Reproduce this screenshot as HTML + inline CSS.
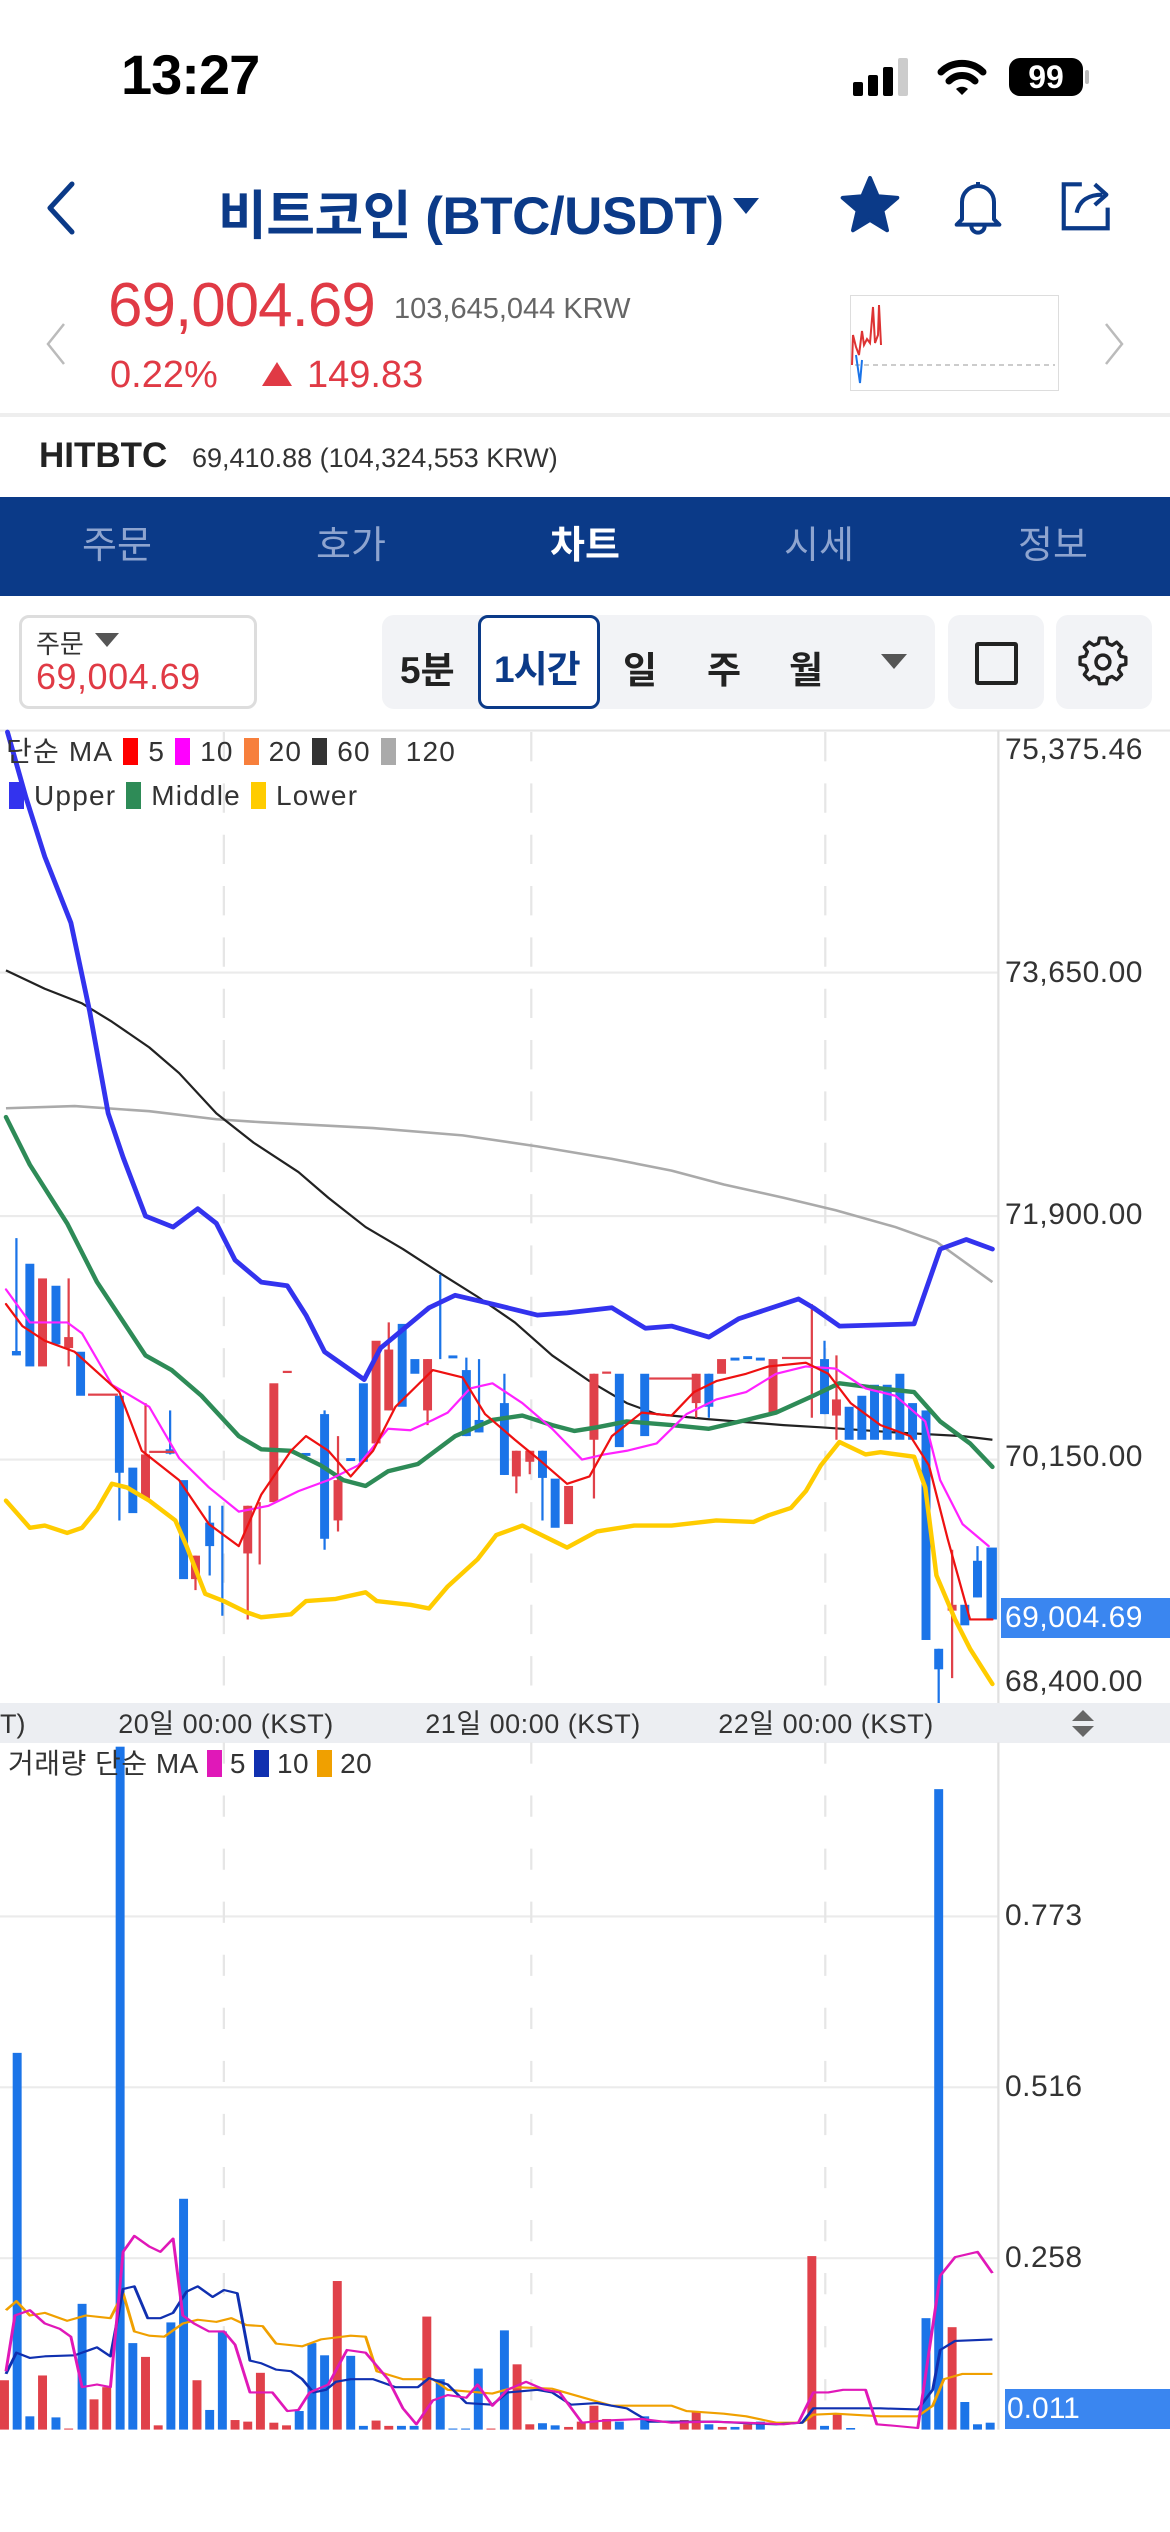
<!DOCTYPE html>
<html><head><meta charset="utf-8">
<style>
*{margin:0;padding:0;box-sizing:border-box}
body{width:1170px;height:2532px;background:#fff;position:relative;overflow:hidden;font-family:"Liberation Sans","Noto Sans CJK KR",sans-serif}
.a{position:absolute;white-space:nowrap}
.tab{position:absolute;top:497px;height:99px;width:234px;line-height:99px;text-align:center;font-size:38px;color:#8ea4cf}
.yl{position:absolute;left:1005px;font-size:30px;color:#333;line-height:34px;letter-spacing:0.5px}
.xl{position:absolute;top:1707px;font-size:27px;color:#333;line-height:34px;transform:translateX(-50%);letter-spacing:0.5px}
.sw{display:inline-block;width:15px;height:27px;vertical-align:-4px;margin:0 10px 0 10px}
.lg{font-size:28px;color:#333;line-height:34px;letter-spacing:1.2px}
</style></head><body>

<!-- status bar -->
<div class="a" style="left:121px;top:42px;font-size:56px;font-weight:bold;color:#000;letter-spacing:-1px">13:27</div>
<svg class="a" style="left:853px;top:58px" width="62" height="38"><rect x="0" y="24" width="10" height="14" rx="2" fill="#000"/><rect x="15" y="17" width="10" height="21" rx="2" fill="#000"/><rect x="30" y="9" width="10" height="29" rx="2" fill="#000"/><rect x="45" y="0" width="10" height="38" rx="2" fill="#ccc"/></svg>
<svg class="a" style="left:937px;top:58px" width="50" height="38"><path d="M4 14 A30 30 0 0 1 46 14" stroke="#000" stroke-width="7" fill="none" stroke-linecap="round"/><path d="M12 23 A18 18 0 0 1 38 23" stroke="#000" stroke-width="7" fill="none" stroke-linecap="round"/><path d="M19 31 L25 37 L31 31 A9 9 0 0 0 19 31Z" fill="#000"/></svg>
<div class="a" style="left:1009px;top:58px;width:74px;height:38px;background:#000;border-radius:11px;color:#fff;font-weight:bold;font-size:32px;text-align:center;line-height:38px">99</div>
<div class="a" style="left:1085px;top:70px;width:4px;height:14px;background:#bbb;border-radius:2px"></div>

<!-- nav -->
<svg class="a" style="left:40px;top:180px" width="40" height="56"><path d="M32 4 L10 28 L32 52" stroke="#0b3a88" stroke-width="5" fill="none" stroke-linecap="round" stroke-linejoin="round"/></svg>
<div class="a" style="left:218px;top:174px;font-size:53px;font-weight:bold;color:#0b3a88;letter-spacing:-0.5px">비트코인 (BTC/USDT)</div>
<svg class="a" style="left:733px;top:198px" width="26" height="18"><path d="M0 0 H26 L13 16Z" fill="#0b3a88"/></svg>
<svg class="a" style="left:838px;top:174px" width="64" height="62" viewBox="0 0 24 24"><path d="M12 1.5 L15 8.6 L22.6 9.2 L16.8 14.2 L18.6 21.8 L12 17.8 L5.4 21.8 L7.2 14.2 L1.4 9.2 L9 8.6Z" fill="#0b3a88" stroke="#0b3a88" stroke-width="1.5" stroke-linejoin="round"/></svg>
<svg class="a" style="left:946px;top:174px" width="64" height="64" viewBox="0 0 24 24"><path d="M6 17 V10.5 A6 6 0 0 1 18 10.5 V17 L20 19 H4 Z M9.5 19.5 A2.5 2.5 0 0 0 14.5 19.5 M12 3 V4.5" stroke="#0b3a88" stroke-width="1.5" fill="none" stroke-linejoin="round"/></svg>
<svg class="a" style="left:1055px;top:174px" width="64" height="62" viewBox="0 0 24 24"><path d="M10 4 H3 V21 H20 V13" stroke="#0b3a88" stroke-width="1.6" fill="none"/><path d="M8 15 C9 10 13 8 18 8 M15 4 L19.5 8 L15 12" stroke="#0b3a88" stroke-width="1.6" fill="none" stroke-linejoin="round"/></svg>

<!-- price -->
<svg class="a" style="left:42px;top:322px" width="28" height="44"><path d="M22 2 L6 22 L22 42" stroke="#bbb" stroke-width="2.5" fill="none"/></svg>
<div class="a" style="left:108px;top:270px;font-size:62px;color:#e03a45;letter-spacing:-1px">69,004.69</div>
<div class="a" style="left:394px;top:293px;font-size:29px;color:#666">103,645,044 KRW</div>
<div class="a" style="left:110px;top:354px;font-size:38px;color:#e03a45">0.22%</div>
<svg class="a" style="left:262px;top:362px" width="30" height="24"><path d="M15 0 L30 24 H0Z" fill="#e03a45"/></svg>
<div class="a" style="left:307px;top:354px;font-size:38px;color:#e03a45">149.83</div>
<div class="a" style="left:850px;top:295px;width:209px;height:96px;border:1px solid #ddd"></div>
<svg class="a" style="left:850px;top:295px" width="209" height="96"><line x1="5" y1="70" x2="205" y2="70" stroke="#ccc" stroke-dasharray="5 4" stroke-width="2"/><path d="M2 70 L3 40 L6 52 L9 60 L12 36 L14 50 L17 44 L20 48 L23 12 L25 48 L28 40 L29 10 L31 50" stroke="#d33" stroke-width="2" fill="none"/><path d="M6 60 L10 88 L12 65" stroke="#1b74e8" stroke-width="2" fill="none"/></svg>
<svg class="a" style="left:1100px;top:322px" width="28" height="44"><path d="M6 2 L22 22 L6 42" stroke="#bbb" stroke-width="2.5" fill="none"/></svg>

<div class="a" style="left:0;top:413px;width:1170px;height:4px;background:#eee"></div>
<div class="a" style="left:39px;top:436px;font-size:35px;font-weight:bold;color:#222">HITBTC</div>
<div class="a" style="left:192px;top:443px;font-size:27px;color:#333">69,410.88 (104,324,553 KRW)</div>

<!-- tabs -->
<div class="a" style="left:0;top:497px;width:1170px;height:99px;background:#0b3a88"></div>
<div class="tab" style="left:0">주문</div>
<div class="tab" style="left:234px">호가</div>
<div class="tab" style="left:468px;color:#fff;font-weight:bold">차트</div>
<div class="tab" style="left:702px">시세</div>
<div class="tab" style="left:936px">정보</div>

<!-- toolbar -->
<div class="a" style="left:19px;top:615px;width:238px;height:94px;border:3px solid #ddd;border-radius:10px"></div>
<div class="a" style="left:36px;top:624px;font-size:26px;color:#333">주문</div>
<svg class="a" style="left:95px;top:633px" width="24" height="16"><path d="M0 0 H24 L12 14Z" fill="#555"/></svg>
<div class="a" style="left:36px;top:656px;font-size:36px;color:#e03a45;letter-spacing:0.5px">69,004.69</div>
<div class="a" style="left:382px;top:615px;width:553px;height:94px;background:#f2f3f6;border-radius:12px"></div>
<div class="a" style="left:478px;top:615px;width:122px;height:94px;background:#fff;border:3px solid #0b3a88;border-radius:10px"></div>
<div class="a" style="left:400px;top:640px;font-size:37px;font-weight:bold;color:#222">5분</div>
<div class="a" style="left:494px;top:639px;font-size:37px;font-weight:bold;color:#0b3a88;letter-spacing:-1px">1시간</div>
<div class="a" style="left:623px;top:640px;font-size:37px;font-weight:bold;color:#222">일</div>
<div class="a" style="left:707px;top:640px;font-size:37px;font-weight:bold;color:#222">주</div>
<div class="a" style="left:789px;top:640px;font-size:37px;font-weight:bold;color:#222">월</div>
<svg class="a" style="left:881px;top:654px" width="26" height="16"><path d="M0 0 H26 L13 15Z" fill="#555"/></svg>
<div class="a" style="left:948px;top:615px;width:96px;height:94px;background:#f2f3f6;border-radius:12px"></div>
<div class="a" style="left:975px;top:642px;width:43px;height:43px;border:4px solid #222;border-radius:3px"></div>
<div class="a" style="left:1056px;top:615px;width:96px;height:94px;background:#f2f3f6;border-radius:12px"></div>
<svg class="a" style="left:1078px;top:636px" width="52" height="52" viewBox="0 0 24 24"><path d="M10.3 2 H13.7 L14.2 4.6 L16.4 5.5 L18.6 4 L21 6.4 L19.5 8.6 L20.4 10.8 L23 11.3 V14.7 L20.4 15.2 L19.5 17.4 L21 19.6 L18.6 22 L16.4 20.5 L14.2 21.4 L13.7 24 H10.3 L9.8 21.4 L7.6 20.5 L5.4 22 L3 19.6 L4.5 17.4 L3.6 15.2 L1 14.7 V11.3 L3.6 10.8 L4.5 8.6 L3 6.4 L5.4 4 L7.6 5.5 L9.8 4.6Z" transform="translate(0,-1) scale(0.96)" stroke="#222" stroke-width="1.6" fill="none" stroke-linejoin="round"/><circle cx="11.5" cy="12" r="3.2" stroke="#222" stroke-width="1.6" fill="none"/></svg>

<!-- price chart -->
<svg class="a" style="left:0;top:600px" width="1170" height="1150" viewBox="0 0 1568 1568" preserveAspectRatio="none">
<line x1="0" y1="178" x2="1568" y2="178" stroke="#e6e6e6" stroke-width="3"/>
<g stroke="#ebebeb" stroke-width="3"><line x1="0" y1="508" x2="1338" y2="508"/><line x1="0" y1="840" x2="1338" y2="840"/><line x1="0" y1="1172" x2="1338" y2="1172"/></g>
<g stroke="#e6e6e6" stroke-width="3" stroke-dasharray="40 30"><line x1="300" y1="180" x2="300" y2="1505"/><line x1="712" y1="180" x2="712" y2="1505"/><line x1="1106" y1="180" x2="1106" y2="1505"/></g>
<line x1="1338" y1="178" x2="1338" y2="1505" stroke="#e0e0e0" stroke-width="3"/>
<g fill="none" stroke-linejoin="round">
<polyline stroke="#aaa" stroke-width="3.5" points="8,693 100,690 200,697 290,708 350,712 500,720 620,730 720,745 820,762 900,778 970,797 1050,815 1120,832 1200,855 1255,875 1330,930"/>
<polyline stroke="#222" stroke-width="3" points="8,505 60,530 110,550 150,575 200,610 240,645 290,700 340,740 400,780 440,815 490,855 540,885 590,918 640,950 690,985 740,1030 790,1065 840,1095 880,1110 950,1117 1050,1125 1100,1128 1200,1135 1290,1140 1330,1145"/>
</g>
<g stroke-width="3">
<line x1="22" y1="870" x2="22" y2="1030" stroke="#1b74e8"/><line x1="92" y1="925" x2="92" y2="1045" stroke="#e0414a"/><line x1="160" y1="1085" x2="160" y2="1255" stroke="#1b74e8"/><line x1="195" y1="1095" x2="195" y2="1225" stroke="#e0414a"/><line x1="228" y1="1105" x2="228" y2="1165" stroke="#1b74e8"/><line x1="262" y1="1303" x2="262" y2="1350" stroke="#e0414a"/><line x1="281" y1="1235" x2="281" y2="1330" stroke="#1b74e8"/><line x1="298" y1="1235" x2="298" y2="1385" stroke="#1b74e8"/><line x1="332" y1="1235" x2="332" y2="1390" stroke="#e0414a"/><line x1="348" y1="1230" x2="348" y2="1315" stroke="#e0414a"/><line x1="435" y1="1105" x2="435" y2="1295" stroke="#1b74e8"/><line x1="453" y1="1140" x2="453" y2="1270" stroke="#e0414a"/><line x1="521" y1="985" x2="521" y2="1105" stroke="#e0414a"/><line x1="573" y1="1035" x2="573" y2="1125" stroke="#e0414a"/><line x1="590" y1="920" x2="590" y2="1035" stroke="#1b74e8"/><line x1="625" y1="1033" x2="625" y2="1140" stroke="#1b74e8"/><line x1="642" y1="1035" x2="642" y2="1135" stroke="#1b74e8"/><line x1="676" y1="1055" x2="676" y2="1193" stroke="#1b74e8"/><line x1="692" y1="1160" x2="692" y2="1218" stroke="#e0414a"/><line x1="710" y1="1160" x2="710" y2="1192" stroke="#e0414a"/><line x1="727" y1="1160" x2="727" y2="1255" stroke="#1b74e8"/><line x1="796" y1="1055" x2="796" y2="1225" stroke="#e0414a"/><line x1="933" y1="1055" x2="933" y2="1115" stroke="#e0414a"/><line x1="950" y1="1055" x2="950" y2="1115" stroke="#1b74e8"/><line x1="1088" y1="960" x2="1088" y2="1115" stroke="#e0414a"/><line x1="1105" y1="1010" x2="1105" y2="1110" stroke="#1b74e8"/><line x1="1121" y1="1030" x2="1121" y2="1145" stroke="#e0414a"/><line x1="1258" y1="1430" x2="1258" y2="1505" stroke="#1b74e8"/><line x1="1276" y1="1295" x2="1276" y2="1470" stroke="#e0414a"/><line x1="1310" y1="1290" x2="1310" y2="1360" stroke="#1b74e8"/>
</g>
<g fill="#1b74e8">
<rect x="16" y="1024" width="12" height="6"/><rect x="34" y="905" width="12" height="140"/><rect x="69" y="935" width="12" height="80"/><rect x="102" y="1025" width="12" height="60"/><rect x="154" y="1085" width="12" height="105"/><rect x="172" y="1183" width="12" height="62"/><rect x="222" y="1158" width="12" height="6"/><rect x="240" y="1200" width="12" height="135"/><rect x="275" y="1258" width="12" height="32"/><rect x="404" y="1163" width="12" height="4"/><rect x="429" y="1110" width="12" height="170"/><rect x="464" y="1170" width="12" height="4"/><rect x="481" y="1068" width="12" height="107"/><rect x="533" y="987" width="12" height="113"/><rect x="550" y="1035" width="12" height="20"/><rect x="601" y="1030" width="12" height="4"/><rect x="619" y="1050" width="12" height="90"/><rect x="636" y="1118" width="12" height="17"/><rect x="670" y="1095" width="12" height="98"/><rect x="721" y="1160" width="12" height="37"/><rect x="738" y="1198" width="12" height="67"/><rect x="824" y="1055" width="12" height="100"/><rect x="858" y="1055" width="12" height="85"/><rect x="944" y="1055" width="12" height="45"/><rect x="979" y="1033" width="12" height="4"/><rect x="996" y="1031" width="12" height="4"/><rect x="1013" y="1033" width="12" height="4"/><rect x="1099" y="1035" width="12" height="75"/><rect x="1132" y="1100" width="12" height="45"/><rect x="1149" y="1085" width="12" height="60"/><rect x="1166" y="1070" width="12" height="75"/><rect x="1183" y="1070" width="12" height="75"/><rect x="1200" y="1055" width="12" height="90"/><rect x="1217" y="1095" width="12" height="50"/><rect x="1235" y="1105" width="12" height="313"/><rect x="1252" y="1430" width="12" height="28"/><rect x="1287" y="1370" width="12" height="28"/><rect x="1304" y="1310" width="12" height="50"/><rect x="1322" y="1292" width="14" height="98"/>
</g>
<g fill="#e0414a">
<rect x="51" y="925" width="12" height="120"/><rect x="86" y="1005" width="12" height="15"/><rect x="118" y="1082" width="40" height="3"/><rect x="189" y="1165" width="12" height="60"/><rect x="200" y="1160" width="35" height="3"/><rect x="256" y="1303" width="12" height="32"/><rect x="326" y="1235" width="12" height="65"/><rect x="361" y="1068" width="12" height="162"/><rect x="379" y="1051" width="12" height="3"/><rect x="447" y="1200" width="12" height="55"/><rect x="498" y="1010" width="12" height="140"/><rect x="515" y="1022" width="12" height="83"/><rect x="567" y="1035" width="12" height="70"/><rect x="686" y="1160" width="12" height="35"/><rect x="704" y="1160" width="12" height="15"/><rect x="756" y="1208" width="12" height="52"/><rect x="790" y="1055" width="12" height="90"/><rect x="807" y="1052" width="12" height="3"/><rect x="870" y="1060" width="60" height="3"/><rect x="927" y="1055" width="12" height="40"/><rect x="961" y="1035" width="12" height="20"/><rect x="1030" y="1035" width="12" height="75"/><rect x="1048" y="1032" width="40" height="3"/><rect x="1115" y="1090" width="12" height="22"/><rect x="1270" y="1370" width="12" height="8"/>
</g>
<g fill="none" stroke-linejoin="round" stroke-linecap="round">
<polyline stroke="#2e8b57" stroke-width="6" points="8,705 40,770 90,850 130,930 195,1030 230,1050 270,1085 320,1140 350,1158 390,1160 430,1180 460,1200 490,1208 520,1188 560,1178 610,1140 660,1118 700,1112 740,1125 770,1133 800,1128 840,1120 900,1125 950,1130 1000,1118 1040,1108 1090,1085 1125,1068 1180,1075 1225,1080 1260,1120 1300,1150 1330,1182"/>
<polyline stroke="#ffcc00" stroke-width="6" points="8,1228 40,1265 60,1262 90,1272 110,1265 130,1240 150,1205 170,1210 200,1228 235,1255 250,1290 275,1355 300,1365 330,1380 350,1387 390,1383 410,1365 450,1362 490,1353 505,1365 550,1370 575,1375 600,1345 640,1308 665,1275 700,1262 740,1282 760,1292 800,1270 850,1262 900,1262 960,1255 1010,1257 1030,1248 1060,1238 1080,1215 1100,1180 1125,1148 1160,1165 1180,1162 1225,1168 1240,1210 1255,1330 1280,1390 1300,1430 1330,1478"/>
<polyline stroke="#ff22ff" stroke-width="3" points="8,940 40,985 90,985 110,1000 150,1070 200,1100 240,1170 280,1210 320,1243 360,1235 400,1215 440,1200 480,1180 520,1130 550,1132 580,1118 600,1108 630,1075 660,1068 700,1095 740,1130 780,1172 810,1165 840,1160 880,1150 920,1110 960,1090 1000,1080 1040,1055 1080,1045 1120,1048 1160,1075 1200,1085 1240,1120 1260,1200 1290,1260 1325,1290"/>
<polyline stroke="#ee1111" stroke-width="3" points="8,960 30,990 60,1010 100,1025 160,1080 190,1160 240,1200 280,1260 320,1290 350,1220 390,1160 410,1140 440,1160 470,1195 500,1160 530,1100 560,1070 580,1050 620,1060 650,1110 690,1145 720,1170 760,1205 790,1195 820,1140 860,1108 900,1112 930,1080 960,1065 1000,1055 1030,1045 1080,1040 1110,1055 1140,1095 1180,1125 1220,1140 1245,1180 1270,1280 1300,1390 1330,1390"/>
<polyline stroke="#3333ee" stroke-width="6.5" points="10,180 35,270 60,350 95,440 120,560 145,700 165,760 195,840 232,855 265,830 290,850 315,900 350,930 385,935 410,975 435,1025 488,1063 510,1020 575,965 610,948 660,960 720,975 760,972 820,965 865,993 900,990 950,1005 990,980 1070,953 1090,965 1125,990 1225,987 1260,885 1295,872 1330,885"/>
</g>
</svg>
<div class="a" style="left:0;top:1703px;width:1170px;height:40px;background:#eceef2"></div>
<div class="a" style="left:0;top:1707px;font-size:27px;color:#333;line-height:34px">T)</div>
<div class="xl" style="left:226px">20일 00:00 (KST)</div>
<div class="xl" style="left:533px">21일 00:00 (KST)</div>
<div class="xl" style="left:826px">22일 00:00 (KST)</div>
<svg class="a" style="left:1072px;top:1710px" width="22" height="28"><path d="M11 0 L22 11 H0Z M0 16 H22 L11 27Z" fill="#666"/></svg>

<div class="a lg" style="left:6px;top:735px">단순 MA<span class="sw" style="background:#f00"></span>5<span class="sw" style="background:#f0f"></span>10<span class="sw" style="background:#f77f3c"></span>20<span class="sw" style="background:#333"></span>60<span class="sw" style="background:#aaa"></span>120</div>
<div class="a lg" style="left:0;top:779px"><span class="sw" style="background:#3333ee;margin-left:9px"></span>Upper<span class="sw" style="background:#2e8b57"></span>Middle<span class="sw" style="background:#ffcc00"></span>Lower</div>
<div class="yl" style="top:733px">75,375.46</div>
<div class="yl" style="top:956px">73,650.00</div>
<div class="yl" style="top:1198px">71,900.00</div>
<div class="yl" style="top:1440px">70,150.00</div>
<div class="a" style="left:1001px;top:1598px;width:169px;height:40px;background:#3a86f0;color:#fff;font-size:30px;line-height:40px;padding-left:4px;letter-spacing:0.5px">69,004.69</div>
<div class="yl" style="top:1665px">68,400.00</div>

<!-- volume -->
<svg class="a" style="left:0;top:1700px" width="1170" height="832" viewBox="0 0 1568 1568" preserveAspectRatio="none">
<g stroke="#ebebeb" stroke-width="4"><line x1="0" y1="408" x2="1338" y2="408"/><line x1="0" y1="730" x2="1338" y2="730"/><line x1="0" y1="1052" x2="1338" y2="1052"/></g>
<g stroke="#e6e6e6" stroke-width="3" stroke-dasharray="40 60"><line x1="300" y1="80" x2="300" y2="1375"/><line x1="712" y1="80" x2="712" y2="1375"/><line x1="1106" y1="80" x2="1106" y2="1375"/></g>
<line x1="1338" y1="80" x2="1338" y2="1375" stroke="#e0e0e0" stroke-width="3"/>
<g fill="#1b74e8">
<rect x="17" y="665" width="12" height="710"/><rect x="34" y="1350" width="12" height="25"/><rect x="69" y="1352" width="12" height="23"/><rect x="104" y="1138" width="12" height="237"/><rect x="155" y="88" width="12" height="1287"/><rect x="172" y="1212" width="12" height="163"/><rect x="223" y="1173" width="12" height="202"/><rect x="240" y="940" width="12" height="435"/><rect x="275" y="1338" width="12" height="37"/><rect x="292" y="1190" width="12" height="185"/><rect x="395" y="1340" width="12" height="35"/><rect x="412" y="1212" width="12" height="163"/><rect x="429" y="1235" width="12" height="140"/><rect x="464" y="1236" width="12" height="139"/><rect x="481" y="1368" width="12" height="7"/><rect x="532" y="1368" width="12" height="7"/><rect x="549" y="1368" width="12" height="7"/><rect x="584" y="1280" width="12" height="95"/><rect x="601" y="1373" width="12" height="2"/><rect x="618" y="1373" width="12" height="2"/><rect x="635" y="1260" width="12" height="115"/><rect x="670" y="1188" width="12" height="187"/><rect x="721" y="1363" width="12" height="12"/><rect x="738" y="1367" width="12" height="8"/><rect x="824" y="1360" width="12" height="15"/><rect x="858" y="1350" width="12" height="25"/><rect x="944" y="1365" width="12" height="10"/><rect x="979" y="1370" width="12" height="5"/><rect x="1013" y="1360" width="12" height="15"/><rect x="1099" y="1368" width="12" height="7"/><rect x="1134" y="1372" width="12" height="3"/><rect x="1235" y="1165" width="12" height="210"/><rect x="1252" y="168" width="12" height="1207"/><rect x="1287" y="1323" width="12" height="52"/><rect x="1304" y="1365" width="12" height="10"/><rect x="1321" y="1362" width="12" height="13"/>
</g>
<g fill="#e0414a">
<rect x="0" y="1282" width="12" height="93"/><rect x="51" y="1273" width="12" height="102"/><rect x="86" y="1373" width="12" height="2"/><rect x="120" y="1318" width="12" height="57"/><rect x="137" y="1295" width="12" height="80"/><rect x="189" y="1238" width="12" height="137"/><rect x="206" y="1367" width="12" height="8"/><rect x="258" y="1282" width="12" height="93"/><rect x="309" y="1357" width="12" height="18"/><rect x="326" y="1360" width="12" height="15"/><rect x="343" y="1268" width="12" height="107"/><rect x="361" y="1362" width="12" height="13"/><rect x="378" y="1367" width="12" height="8"/><rect x="446" y="1095" width="12" height="280"/><rect x="498" y="1358" width="12" height="17"/><rect x="515" y="1368" width="12" height="7"/><rect x="566" y="1162" width="12" height="213"/><rect x="652" y="1373" width="12" height="2"/><rect x="687" y="1252" width="12" height="123"/><rect x="704" y="1365" width="12" height="10"/><rect x="756" y="1370" width="12" height="5"/><rect x="773" y="1360" width="12" height="15"/><rect x="790" y="1330" width="12" height="45"/><rect x="807" y="1355" width="12" height="20"/><rect x="911" y="1357" width="12" height="18"/><rect x="927" y="1340" width="12" height="35"/><rect x="962" y="1370" width="12" height="5"/><rect x="996" y="1365" width="12" height="10"/><rect x="1082" y="1048" width="12" height="327"/><rect x="1116" y="1345" width="12" height="30"/><rect x="1270" y="1182" width="12" height="193"/>
</g>
<g fill="none" stroke-width="4" stroke-linejoin="round">
<polyline stroke="#f0a000" points="8,1150 22,1133 40,1160 60,1155 90,1170 115,1160 148,1165 165,1118 180,1190 200,1198 220,1200 245,1175 265,1168 290,1172 310,1165 330,1178 352,1180 370,1213 405,1218 430,1205 470,1198 490,1200 505,1265 540,1280 580,1280 600,1300 660,1307 690,1295 740,1298 790,1318 820,1330 900,1330 920,1340 970,1345 1000,1350 1040,1362 1075,1362 1090,1347 1120,1345 1180,1350 1230,1350 1250,1330 1265,1280 1290,1270 1330,1270"/>
<polyline stroke="#1030b0" points="8,1270 22,1230 40,1240 60,1237 100,1235 120,1225 130,1220 148,1237 165,1110 180,1105 198,1165 215,1165 232,1155 250,1115 265,1105 285,1125 300,1112 318,1118 335,1245 350,1250 370,1262 390,1265 405,1280 420,1305 437,1300 450,1285 470,1280 500,1280 530,1295 560,1295 575,1278 600,1290 625,1325 660,1328 680,1305 720,1300 740,1305 765,1328 800,1325 840,1335 870,1360 920,1360 960,1360 1000,1363 1040,1365 1075,1362 1090,1335 1120,1335 1180,1335 1230,1337 1250,1300 1260,1225 1280,1208 1330,1205"/>
<polyline stroke="#e018b8" points="8,1265 20,1160 40,1150 60,1175 80,1185 95,1200 110,1295 130,1290 148,1295 165,1040 180,1010 200,1030 215,1040 232,1015 245,1160 260,1175 280,1190 300,1190 315,1215 335,1305 365,1305 385,1340 400,1338 415,1305 440,1290 465,1225 490,1230 520,1280 540,1335 558,1365 580,1320 600,1310 625,1315 640,1290 660,1330 680,1300 705,1285 730,1300 750,1305 780,1362 810,1358 860,1355 900,1362 950,1360 1000,1362 1050,1365 1070,1362 1090,1305 1110,1305 1130,1300 1160,1300 1175,1365 1200,1368 1230,1372 1260,1085 1280,1050 1310,1040 1330,1080"/>
</g>
</svg>
<div class="a lg" style="left:8px;top:1747px;letter-spacing:0.5px">거래량 단순 MA<span class="sw" style="background:#e018b8;margin:0 8px"></span>5<span class="sw" style="background:#1030b0;margin:0 8px"></span>10<span class="sw" style="background:#f0a000;margin:0 8px"></span>20</div>
<div class="yl" style="top:1899px">0.773</div>
<div class="yl" style="top:2070px">0.516</div>
<div class="yl" style="top:2241px">0.258</div>
<div class="a" style="left:1005px;top:2389px;width:165px;height:40px;background:#3a86f0;color:#fff;font-size:30px;line-height:40px;padding-left:2px">0.011</div>
</body></html>
